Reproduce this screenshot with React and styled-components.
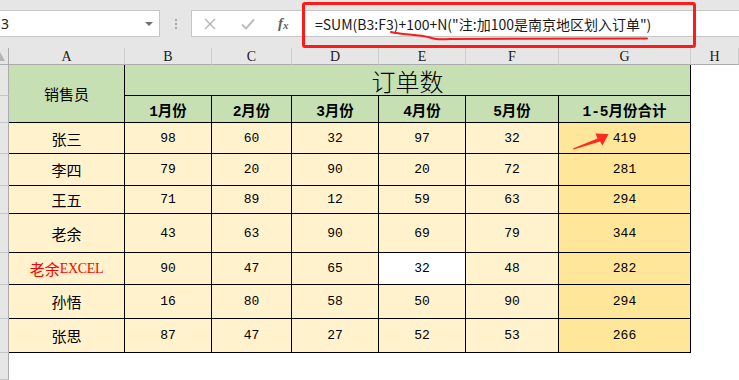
import React from "react";
import styled, { createGlobalStyle } from "styled-components";

const GlobalStyle = createGlobalStyle`
  html, body {
    margin: 0;
    padding: 0;
    background: #ffffff;
    overflow: hidden;
  }
  body {
    font-family: "Noto Sans", "Noto Sans CJK SC", sans-serif;
  }
`;

const COLS = ["A", "B", "C", "D", "E", "F", "G", "H"];
const MONTHS = ["1月份", "2月份", "3月份", "4月份", "5月份", "1-5月份合计"];
const ROW_HEIGHTS = [31, 27, 31, 32, 28, 39, 32, 34, 34];

const rows = [
  { name: "张三", vals: [98, 60, 32, 97, 32], total: 419, arrow: true },
  { name: "李四", vals: [79, 20, 90, 20, 72], total: 281 },
  { name: "王五", vals: [71, 89, 12, 59, 63], total: 294 },
  { name: "老余", vals: [43, 63, 90, 69, 79], total: 344 },
  { name: "老余", latin: "EXCEL", vals: [90, 47, 65, 32, 48], total: 282, red: true, blank: 3 },
  { name: "孙悟", vals: [16, 80, 58, 50, 90], total: 294 },
  { name: "张思", vals: [87, 47, 27, 52, 53], total: 266 },
];

function App() {
  return (
    <>
      <GlobalStyle />
      <Window>
        <Toolbar>
          <NameBox>
            <span>3</span>
            <Caret />
          </NameBox>
          <Grip>
            <i />
            <i />
            <i />
          </Grip>
          <FormulaBox>
            <ToolIcon>
              <svg width="12" height="12" viewBox="0 0 12 12">
                <path d="M1 1 L11 11 M11 1 L1 11" stroke="#b3b3b3" strokeWidth="1.4" fill="none" />
              </svg>
            </ToolIcon>
            <ToolIcon>
              <svg width="14" height="12" viewBox="0 0 14 12">
                <path d="M1 6.5 L5 10.5 L13 1.5" stroke="#bdbdbd" strokeWidth="2" fill="none" />
              </svg>
            </ToolIcon>
            <Fx>
              f<sub>x</sub>
            </Fx>
            <FormulaText>=SUM(B3:F3)+100+N("注:加100是南京地区划入订单")</FormulaText>
            <Scribble width="270" height="14" viewBox="0 0 270 14">
              <path
                d="M1 3 C 12 6, 28 5, 40 8.5 C 44 10, 46 10.5, 60 10 L 257 9.5"
                stroke="#ff1a1a"
                strokeWidth="2"
                fill="none"
                strokeLinecap="round"
              />
            </Scribble>
          </FormulaBox>
          <RedFrame />
        </Toolbar>

        <Sheet>
          <Corner />
          {COLS.map((c) => (
            <ColHead key={c}>{c}</ColHead>
          ))}

          <RowHead style={{ gridRow: "2" }} />
          <RowHead style={{ gridRow: "3" }} />
          <HeadCell $row="2 / span 2" $col="2">
            销售员
          </HeadCell>
          <Title $row="2" $col="3 / span 6">
            订单数
          </Title>
          {MONTHS.map((m, i) => (
            <MonthCell key={m} $row="3" $col={String(i + 3)}>
              {m}
            </MonthCell>
          ))}
          <Blank $row="2 / span 2" $col="9" />

          {rows.map((r, ri) => {
            const row = String(ri + 4);
            return (
              <React.Fragment key={ri}>
                <RowHead style={{ gridRow: row }} />
                <NameCell $row={row} $col="2" $red={r.red}>
                  {r.name}
                  {r.latin && <Latin>{r.latin}</Latin>}
                </NameCell>
                {r.vals.map((v, vi) => (
                  <NumCell
                    key={vi}
                    $row={row}
                    $col={String(vi + 3)}
                    $bg={r.blank === vi ? "#ffffff" : "#fff2cc"}
                  >
                    {v}
                  </NumCell>
                ))}
                <NumCell $row={row} $col="8" $bg="#ffe699">
                  {r.total}
                  {r.arrow && (
                    <Arrow width="40" height="20" viewBox="0 0 40 20">
                      <polygon
                        points="0,15.5 24.5,5.5 22.5,0.5 35.5,1 29.5,12.5 27,8.5 0.5,16.5"
                        fill="#ff2a1f"
                      />
                    </Arrow>
                  )}
                </NumCell>
                <Blank $row={row} $col="9" />
              </React.Fragment>
            );
          })}

          <RowHead style={{ gridRow: "11" }} />
          <Blank $row="11" $col="2 / span 8" />
        </Sheet>
      </Window>
    </>
  );
}

const Window = styled.div`
  width: 739px;
  height: 380px;
  overflow: hidden;
  background: #e6e6e6;
  display: flex;
  flex-direction: column;
`;

const Toolbar = styled.div`
  position: relative;
  height: 48px;
  flex: none;
  display: flex;
  align-items: flex-start;
  padding-top: 10px;
  box-sizing: border-box;
`;

const NameBox = styled.div`
  width: 161px;
  height: 27px;
  margin-left: -1px;
  box-sizing: border-box;
  background: #ffffff;
  border: 1px solid #c6c6c6;
  display: flex;
  align-items: center;
  justify-content: space-between;
  padding: 0 6px 0 1px;
  font-size: 14px;
  color: #222;
`;

const Caret = styled.span`
  width: 0;
  height: 0;
  border-left: 4px solid transparent;
  border-right: 4px solid transparent;
  border-top: 4px solid #6e6e6e;
`;

const Grip = styled.div`
  width: 31px;
  height: 27px;
  display: flex;
  flex-direction: column;
  align-items: center;
  justify-content: center;
  gap: 2px;
  i {
    width: 2px;
    height: 2px;
    background: #a8a8a8;
  }
`;

const FormulaBox = styled.div`
  position: relative;
  flex: 1;
  height: 27px;
  margin-right: -2px;
  box-sizing: border-box;
  background: #ffffff;
  border: 1px solid #c6c6c6;
  display: flex;
  align-items: center;
  padding-left: 12px;
`;

const ToolIcon = styled.span`
  width: 37px;
  display: flex;
  justify-content: flex-start;
  align-items: center;
`;

const Fx = styled.span`
  width: 32px;
  font-family: "Liberation Serif", serif;
  font-style: italic;
  font-weight: bold;
  font-size: 15px;
  color: #606060;
  sub {
    font-size: 11px;
    vertical-align: -1px;
  }
`;

const FormulaText = styled.span`
  font-family: "Noto Sans CJK SC", "Noto Sans", sans-serif;
  font-size: 14px;
  color: #1a1a1a;
  white-space: nowrap;
  margin-left: 5px;
`;

const Scribble = styled.svg`
  position: absolute;
  left: 198px;
  top: 18px;
`;

const RedFrame = styled.div`
  position: absolute;
  left: 302px;
  top: 2px;
  width: 394px;
  height: 46px;
  box-sizing: border-box;
  border: 3px solid #ff1a1a;
  border-radius: 3px;
`;

const Sheet = styled.div`
  flex: 1;
  display: grid;
  grid-template-columns: 9px 116px 87px 80px 87px 87px 93px 132px 1fr;
  grid-template-rows: 17px ${ROW_HEIGHTS.map((h) => h + "px").join(" ")} 1fr;
  background: #ffffff;
`;

const Corner = styled.div`
  background: #e6e6e6;
  border-right: 1px solid #ababab;
  border-bottom: 1px solid #ababab;
  position: relative;
  &::after {
    content: "";
    position: absolute;
    left: 0;
    bottom: 3px;
    width: 0;
    height: 0;
    border-right: 5px solid transparent;
    border-bottom: 9px solid #b4b4b4;
  }
`;

const ColHead = styled.div`
  background: #e6e6e6;
  border-right: 1px solid #cdcdcd;
  border-bottom: 1px solid #ababab;
  display: flex;
  align-items: center;
  justify-content: center;
  font-family: "Liberation Serif", serif;
  font-size: 14px;
  color: #1a1a1a;
  padding-top: 1px;
  &:last-child {
    border-right: none;
  }
`;

const RowHead = styled.div`
  grid-column: 1;
  background: #e6e6e6;
  border-right: 1px solid #ababab;
  border-bottom: 1px solid #c6c6c6;
`;

const Cell = styled.div`
  grid-row: ${(p) => p.$row};
  grid-column: ${(p) => p.$col};
  border-right: 1px solid #000;
  border-bottom: 1px solid #000;
  display: flex;
  align-items: center;
  justify-content: center;
  position: relative;
  white-space: nowrap;
`;

const HeadCell = styled(Cell)`
  background: #c6e0b4;
  font-family: "Noto Sans CJK SC", sans-serif;
  font-size: 15px;
  color: #000;
`;

const Title = styled(HeadCell)`
  font-size: 24px;
  font-weight: 300;
  padding-top: 1px;
`;

const MonthCell = styled(HeadCell)`
  font-family: "Liberation Mono", "Noto Sans CJK SC", monospace;
  font-weight: bold;
  font-size: 14.5px;
`;

const NameCell = styled(Cell)`
  background: #fff2cc;
  font-family: "Noto Sans CJK SC", sans-serif;
  font-size: 15px;
  color: ${(p) => (p.$red ? "#ff0000" : "#000")};
`;

const Latin = styled.span`
  font-family: "Liberation Serif", serif;
  font-size: 14px;
  letter-spacing: -0.3px;
  padding-top: 1px;
`;

const NumCell = styled(Cell)`
  background: ${(p) => p.$bg};
  font-family: "Liberation Mono", monospace;
  font-size: 13px;
  color: #000;
`;

const Blank = styled.div`
  grid-row: ${(p) => p.$row};
  grid-column: ${(p) => p.$col};
  background: #ffffff;
`;

const Arrow = styled.svg`
  position: absolute;
  left: 14px;
  top: 10px;
`;

export default App;
